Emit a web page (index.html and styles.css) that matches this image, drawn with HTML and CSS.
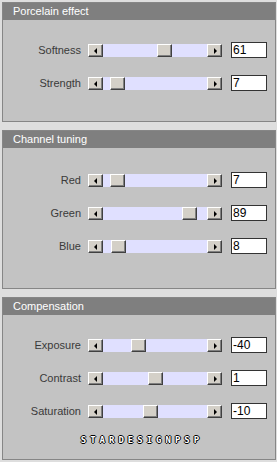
FILE: index.html
```html
<!DOCTYPE html>
<html>
<head>
<meta charset="utf-8">
<link rel="stylesheet" href="styles.css">
</head>
<body>
<div class="page">
  <section class="panel panel-a">
    <div class="panel-head">Porcelain effect</div>
    <div class="panel-body">
      <div class="row">
        <span class="label">Softness</span>
        <div class="slider"><span class="btn btn-left"></span><span class="track"><span class="thumb" style="left:54px"></span></span><span class="btn btn-right"></span></div>
        <span class="value">61</span>
      </div>
      <div class="row">
        <span class="label">Strength</span>
        <div class="slider"><span class="btn btn-left"></span><span class="track"><span class="thumb" style="left:7px"></span></span><span class="btn btn-right"></span></div>
        <span class="value">7</span>
      </div>
    </div>
  </section>

  <section class="panel panel-b">
    <div class="panel-head">Channel tuning</div>
    <div class="panel-body">
      <div class="row">
        <span class="label">Red</span>
        <div class="slider"><span class="btn btn-left"></span><span class="track"><span class="thumb" style="left:7px"></span></span><span class="btn btn-right"></span></div>
        <span class="value">7</span>
      </div>
      <div class="row">
        <span class="label">Green</span>
        <div class="slider"><span class="btn btn-left"></span><span class="track"><span class="thumb" style="left:79px"></span></span><span class="btn btn-right"></span></div>
        <span class="value">89</span>
      </div>
      <div class="row">
        <span class="label">Blue</span>
        <div class="slider"><span class="btn btn-left"></span><span class="track"><span class="thumb" style="left:8px"></span></span><span class="btn btn-right"></span></div>
        <span class="value">8</span>
      </div>
    </div>
  </section>

  <section class="panel panel-c">
    <div class="panel-head">Compensation</div>
    <div class="panel-body">
      <div class="row">
        <span class="label">Exposure</span>
        <div class="slider"><span class="btn btn-left"></span><span class="track"><span class="thumb" style="left:28px"></span></span><span class="btn btn-right"></span></div>
        <span class="value">-40</span>
      </div>
      <div class="row">
        <span class="label">Contrast</span>
        <div class="slider"><span class="btn btn-left"></span><span class="track"><span class="thumb" style="left:45px"></span></span><span class="btn btn-right"></span></div>
        <span class="value">1</span>
      </div>
      <div class="row">
        <span class="label">Saturation</span>
        <div class="slider"><span class="btn btn-left"></span><span class="track"><span class="thumb" style="left:40px"></span></span><span class="btn btn-right"></span></div>
        <span class="value">-10</span>
      </div>
      <div class="brand">STARDESIGNPSP</div>
    </div>
  </section>
</div>
</body>
</html>
```

FILE: styles.css
```css
* { box-sizing: border-box; }
html, body {
  margin: 0;
  padding: 0;
  background: #dedede;
}
body {
  font-family: "Liberation Sans", Arial, sans-serif;
  width: 277px;
  height: 462px;
  overflow: hidden;
}
.page {
  padding: 2px 1px 0 2px;
  display: flex;
  flex-direction: column;
  gap: 8px;
}
.panel {
  border: 1px solid #868686;
  background: #c3c3c3;
  width: 274px;
}
.panel-head {
  height: 17px;
  background: #7f7f7f;
  color: #ffffff;
  font-size: 11px;
  line-height: 17px;
  padding-left: 10px;
}
.panel-body {
  display: flex;
  flex-direction: column;
  gap: 17px;
}
.panel-a .panel-body { padding: 22px 0 30px; }
.panel-b .panel-body { padding: 24px 0 34px; }
.panel-c .panel-body { padding: 22px 0 0; }

.row {
  display: flex;
  align-items: center;
  height: 16px;
}
.label {
  width: 78px;
  margin-right: 7px;
  text-align: right;
  font-size: 11px;
  color: #3a3a3a;
}
.slider {
  display: flex;
  width: 134px;
  height: 13px;
}
.btn {
  position: relative;
  width: 15px;
  height: 13px;
  background: #d4d0c8;
  border-top: 1px solid #ffffff;
  border-left: 1px solid #ffffff;
  border-right: 1px solid #404040;
  border-bottom: 1px solid #404040;
  box-shadow: inset -1px -1px 0 #808080;
}
.btn::after {
  content: "";
  position: absolute;
  top: 3px;
  width: 0;
  height: 0;
  border-top: 3px solid transparent;
  border-bottom: 3px solid transparent;
}
.btn-left::after {
  left: 5px;
  border-right: 3px solid #000;
}
.btn-right::after {
  left: 6px;
  border-left: 3px solid #000;
}
.track {
  position: relative;
  width: 104px;
  height: 13px;
  background: #e0e0ff;
}
.thumb {
  position: absolute;
  top: 0;
  width: 15px;
  height: 13px;
  background: #d4d0c8;
  border-top: 1px solid #ffffff;
  border-left: 1px solid #ffffff;
  border-right: 1px solid #404040;
  border-bottom: 1px solid #404040;
  box-shadow: inset -1px -1px 0 #808080;
}
.value {
  margin-left: 9px;
  width: 36px;
  height: 16px;
  background: #ffffff;
  border: 1px solid #333333;
  font-size: 12px;
  line-height: 14px;
  padding-left: 1px;
  color: #000;
}
.brand {
  height: 23px;
  padding-top: 0;
  text-align: center;
  padding-left: 6px;
  font-family: "DejaVu Sans Mono", monospace;
  font-weight: bold;
  font-size: 9px;
  letter-spacing: 4px;
  line-height: 9px;
  color: #ffffff;
  text-shadow: 1px 0 0 #000, -1px 0 0 #000, 0 1px 0 #000, 0 -1px 0 #000;
}
```
